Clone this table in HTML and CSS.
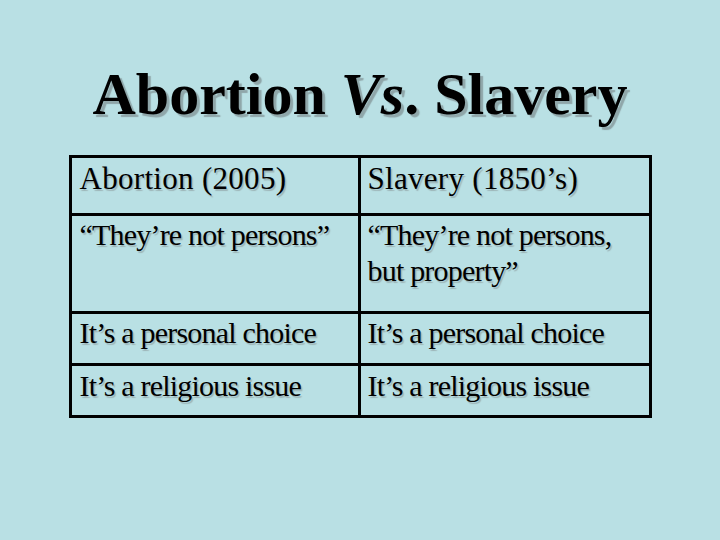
FILE: index.html
```html
<!DOCTYPE html>
<html>
<head>
<meta charset="utf-8">
<link rel="stylesheet" href="styles.css">
</head>
<body>
<div class="slide">
  <h1 class="title">Abortion <em>Vs</em>. Slavery</h1>
  <table class="compare">
    <colgroup><col class="c1"><col class="c2"></colgroup>
    <tr class="r1"><td>Abortion (2005)</td><td>Slavery (1850’s)</td></tr>
    <tr class="r2"><td>“They’re not persons”</td><td>“They’re not persons, but property”</td></tr>
    <tr class="r3"><td>It’s a personal choice</td><td>It’s a personal choice</td></tr>
    <tr class="r4"><td>It’s a religious issue</td><td>It’s a religious issue</td></tr>
  </table>
</div>
</body>
</html>
```
FILE: styles.css
```css
html, body {
  margin: 0;
  padding: 0;
  background: #b9e0e4;
}
.slide {
  width: 720px;
  height: 540px;
  display: flex;
  flex-direction: column;
  align-items: center;
  font-family: "Liberation Serif", "Times New Roman", serif;
  color: #000;
}
.title {
  margin: 59px 0 0 0;
  font-family: "Liberation Serif", "Times New Roman", serif;
  font-size: 60px;
  line-height: 70px;
  font-weight: bold;
  text-shadow: 3px 3px 1px #8fa6a9;
}
.title em {
  font-style: italic;
}
.compare {
  margin-top: 26px;
  border-collapse: collapse;
  width: 580px;
  table-layout: fixed;
}
.c1 { width: 289px; }
.c2 { width: 291px; }
.compare td {
  border: 3px solid #000;
  font-family: "Liberation Serif", "Times New Roman", serif;
  font-size: 30px;
  line-height: 36px;
  letter-spacing: -0.8px;
  vertical-align: top;
  padding: 1px 4px 0 7px;
  text-shadow: 1.5px 1.5px 1px #9db5b8;
}
.r1 td { height: 52px; padding-top: 3px; font-size: 31px; letter-spacing: 0.3px; }
.r2 td { height: 94px; }
.r3 td { height: 48px; }
.r4 td { height: 47px; padding-top: 2px; }
.compare td:first-child { padding-left: 8px; }
```
